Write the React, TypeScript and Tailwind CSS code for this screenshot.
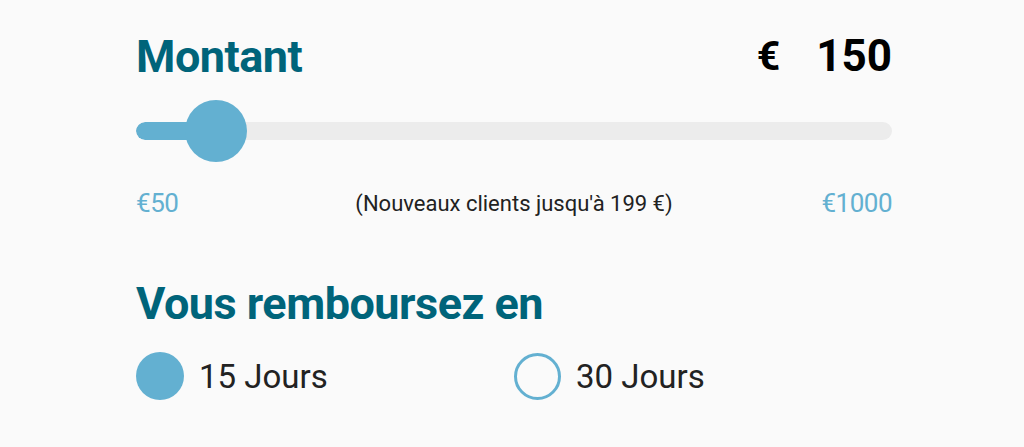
import { useState } from 'react';

const font = { fontFamily: 'Roboto, "Noto Sans", sans-serif' };

export default function App() {
	const [amount] = useState(150);
	const [days, setDays] = useState(15);
	const min = 50;
	const max = 1000;
	const pct = ((amount - min) / (max - min)) * 100;

	return (
		<div className="min-h-screen bg-[#fafafa]" style={font}>
			<div className="pl-[136px] pr-[132px] pt-[30px]">
				{/* Montant */}
				<div className="flex items-center justify-between h-[52px]">
					<h2 className="text-[45px] font-bold text-[#00647a] leading-none tracking-[-0.5px]">
						Montant
					</h2>
					<div className="flex items-center font-bold text-black leading-none">
						<span className="text-[41px]">€</span>
						<span className="ml-[36px] text-[44px]">{amount}</span>
					</div>
				</div>

				{/* Slider */}
				<div className="relative h-[64px] mt-[17px] flex items-center">
					<div className="w-full h-[18px] rounded-full bg-[#ececec] overflow-hidden">
						<div
							className="h-full bg-[#63b0d1] rounded-full"
							style={{ width: `${pct}%` }}
						/>
					</div>
					<div
						className="absolute top-[1px] w-[62px] h-[62px] rounded-full bg-[#63b0d1] -translate-x-1/2"
						style={{ left: `${pct}%` }}
					/>
				</div>

				{/* Limits */}
				<div className="grid grid-cols-[1fr_auto_1fr] items-center mt-[21px] h-[30px]">
					<span className="text-[26px] text-[#63b0d1] tracking-[-0.5px]">€{min}</span>
					<span className="text-[22px] text-[#222]">
						(Nouveaux clients jusqu'à 199 €)
					</span>
					<span className="text-[26px] text-[#63b0d1] tracking-[-0.5px] text-right">
						€{max}
					</span>
				</div>

				{/* Remboursement */}
				<h2 className="mt-[67px] text-[45px] font-bold text-[#00647a] leading-none tracking-[-0.5px]">
					Vous remboursez en
				</h2>

				<div className="grid grid-cols-2 mt-[26px]">
					{[15, 30].map((d) => (
						<button
							key={d}
							onClick={() => setDays(d)}
							className="flex items-center gap-[15px] text-left"
						>
							{days === d ? (
								<span className="w-[48px] h-[48px] rounded-full bg-[#63b0d1]" />
							) : (
								<span className="w-[47px] h-[47px] rounded-full border-[3px] border-[#63b0d1]" />
							)}
							<span className="text-[33px] text-[#222] leading-none">
								{d} Jours
							</span>
						</button>
					))}
				</div>
			</div>
		</div>
	);
}
